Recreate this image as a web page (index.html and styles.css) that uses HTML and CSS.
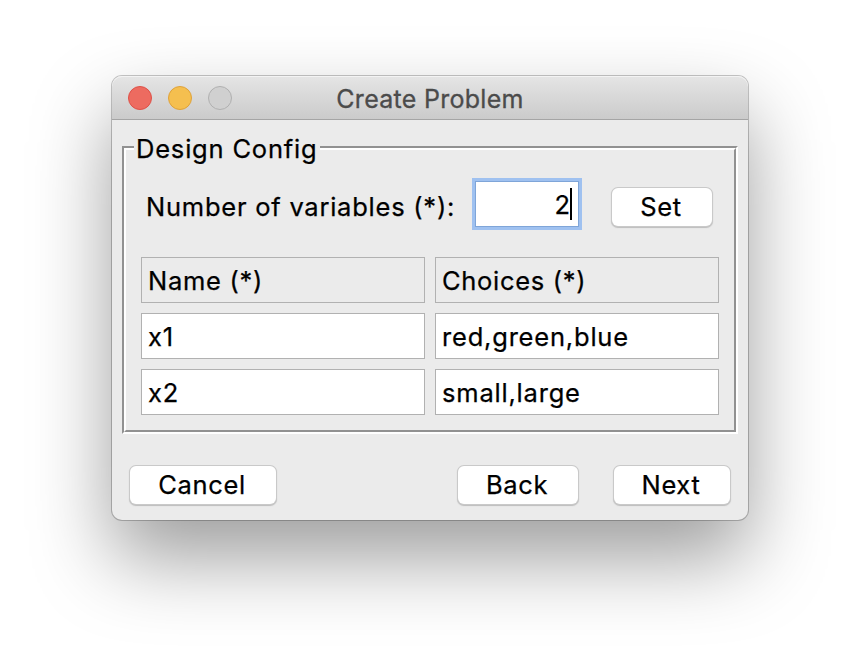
FILE: index.html
```html
<!DOCTYPE html>
<html lang="en">
<head>
<meta charset="utf-8">
<title>Create Problem</title>
<link rel="stylesheet" href="styles.css">
</head>
<body>
<main class="window">
  <header class="titlebar">
    <div class="lights">
      <span class="light light-close"></span>
      <span class="light light-minimize"></span>
      <span class="light light-disabled"></span>
    </div>
    <h1 class="title">Create Problem</h1>
  </header>
  <section class="content">
    <div class="group">
      <div class="group-inner">
        <div class="legend">Design Config</div>
        <div class="count-row">
          <span class="count-label">Number of variables (*):</span>
          <div class="count-input"><span>2</span><i class="caret"></i></div>
          <button class="button button-set">Set</button>
        </div>
        <div class="table">
          <div class="cell cell-head">Name (*)</div>
          <div class="cell cell-head">Choices (*)</div>
          <div class="cell">x1</div>
          <div class="cell">red,green,blue</div>
          <div class="cell">x2</div>
          <div class="cell">small,large</div>
        </div>
      </div>
    </div>
    <footer class="actions">
      <button class="button button-cancel">Cancel</button>
      <button class="button button-back">Back</button>
      <button class="button button-next">Next</button>
    </footer>
  </section>
</main>
</body>
</html>
```
FILE: styles.css
```css
* { box-sizing: border-box; }

body {
  margin: 0;
  width: 860px;
  height: 668px;
  padding: 76px 0 0 112px;
  overflow: hidden;
  background: #fff;
  color: #000;
  font: 25.5px/32px Inter, "Liberation Sans", sans-serif;
  letter-spacing: .8px;
  white-space: nowrap;
  -webkit-text-stroke: .25px currentColor;
}

.window {
  width: 636px;
  height: 444px;
  border-radius: 10px;
  background: #ebebeb;
  box-shadow: 0 0 0 1px rgba(0, 0, 0, .22), 0 38px 80px rgba(0, 0, 0, .39);
}

.titlebar {
  display: grid;
  grid-template-columns: 120px 1fr 120px;
  align-items: center;
  height: 44px;
  padding: 0 16px;
  border-bottom: 1px solid #a5a5a5;
  border-radius: 10px 10px 0 0;
  background: linear-gradient(#e5e5e5, #cbcbcb);
  box-shadow: inset 0 1px #f3f3f3;
}

.lights { display: flex; gap: 16px; }

.light {
  width: 24px;
  height: 24px;
  border: 1px solid #de5148;
  border-radius: 50%;
  background: #ed6b60;
}
.light-minimize { border-color: #dfa23a; background: #f5bf4f; }
.light-disabled { border-color: #b0b0b0; background: #d0d0d0; }

.title {
  margin: 2px 0 0;
  color: #4b4b4b;
  font-size: 25px;
  font-weight: 400;
  letter-spacing: .28px;
  text-align: center;
  -webkit-text-stroke: .3px #4b4b4b;
}

.content { padding: 26px 10px 0; }

.group {
  width: 616px;
  height: 288px;
  border: 2px solid;
  border-color: #919191 #fff #fff #919191;
}

.group-inner {
  height: 284px;
  border: 2px solid;
  border-color: #fff #919191 #919191 #fff;
}

.legend {
  width: 186px;
  height: 32px;
  margin: -17px 0 0 8px;
  padding-left: 2px;
  background: #ebebeb;
}

.count-row { display: flex; align-items: flex-start; margin-top: 13px; padding-left: 20px; }
.count-label { width: 326px; margin-top: 13px; letter-spacing: .76px; }

.count-input {
  display: flex;
  justify-content: flex-end;
  width: 110px;
  height: 52px;
  padding: 7px 7px 0 0;
  border: 3px solid #9fc1f0;
  background: #fff;
  box-shadow: inset 0 0 0 1px #7fa5d8;
  letter-spacing: 0;
  line-height: 34px;
}

.caret { width: 2px; height: 32px; background: #000; }

.button {
  height: 38px;
  padding: 0 2px 0 0;
  border: 0;
  border-radius: 6px;
  background: #fff;
  box-shadow: 0 0 0 1px #c9c9c9, 0 1px 1px 1px #bdbdbd;
  color: #000;
  font: inherit;
  letter-spacing: .65px;
}
.button-set { width: 100px; margin: 10px 0 0 30px; }

.table {
  display: grid;
  grid-template-columns: 284px 284px;
  grid-auto-rows: 46px;
  gap: 10px;
  margin: 27px 0 0 15px;
}

.cell { padding: 7px 6px; border: 1px solid #b1b1b1; background: #fff; }
.cell-head { background: #ebebeb; letter-spacing: .7px; }

.actions { display: flex; margin-top: 32px; padding-left: 8px; }
.button-cancel { width: 146px; }
.button-back { width: 120px; margin-left: 182px; }
.button-next { width: 116px; margin-left: 36px; }
```
